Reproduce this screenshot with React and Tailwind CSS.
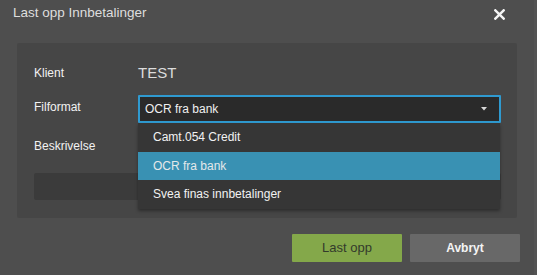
import React from "react";

export default function App() {
  const items = ["Camt.054 Credit", "OCR fra bank", "Svea finas innbetalinger"];
  return (
    <div className="w-[537px] h-[275px] bg-[#535353] font-['Liberation_Sans',Arial,sans-serif] overflow-hidden">
      <div className="w-[534px] h-[275px] bg-[#4e4e4e] flex flex-col">
        <div className="h-[43px] flex items-start justify-between pl-[13px] pr-[29px] pt-[5px]">
          <span className="text-[13.5px] leading-[16px] text-[#dedede]">Last opp Innbetalinger</span>
          <svg width="11" height="11" viewBox="0 0 11 11" className="mt-[4px]">
            <path d="M1.3 1.3 L9.7 9.7 M9.7 1.3 L1.3 9.7" stroke="#f4f4f4" strokeWidth="2.4" strokeLinecap="square" />
          </svg>
        </div>
        <div className="ml-[17px] w-[500px] h-[175px] bg-[#464646] rounded-[2px] pl-[17px] pt-[20px] flex flex-col">
          <div className="flex items-center h-[20px]">
            <span className="w-[104px] text-[12px] text-[#f2f2f2]">Klient</span>
            <span className="text-[15px] text-[#dcdcdc]">TEST</span>
          </div>
          <div className="flex items-center h-[28px] mt-[12px]">
            <span className="w-[104px] text-[12px] text-[#f2f2f2] mb-[4px]">Filformat</span>
            <div className="relative w-[363px] h-[28px]">
              <div className="w-full h-full border-2 border-[#2f9ad0] bg-[#2a2a2a] rounded-[1px] flex items-center justify-between pl-[5px] pr-[12px]">
                <span className="text-[12px] text-[#f0f0f0]">OCR fra bank</span>
                <svg width="6" height="4" viewBox="0 0 6 4">
                  <path d="M0 0 H6 L3 3.5 Z" fill="#d8d8d8" />
                </svg>
              </div>
              <div className="absolute left-0 top-full w-[362px] bg-[#363636] shadow-[0_2px_3px_rgba(0,0,0,0.35)] z-10 flex flex-col">
                {items.map((t, i) => (
                  <div
                    key={t}
                    className={
                      i === 1
                        ? "h-[28.5px] flex items-center pl-[15px] text-[12px] bg-[#3991b3] text-[#e4e8ea]"
                        : "h-[28.5px] flex items-center pl-[15px] text-[12px] text-[#f2f2f2]"
                    }
                  >
                    {t}
                  </div>
                ))}
              </div>
            </div>
          </div>
          <div className="flex items-center h-[20px] mt-[13px]">
            <span className="w-[104px] text-[12px] text-[#f2f2f2]">Beskrivelse</span>
          </div>
          <div className="mt-[17px] w-[467px] h-[27px] bg-[#3b3b3b] rounded-[2px]"></div>
        </div>
        <div className="flex justify-end gap-[8px] mt-[16px] pr-[14px]">
          <button className="w-[110px] h-[28px] bg-[#84a84a] rounded-[1px] text-[13px] text-[#333a2c]">Last opp</button>
          <button className="w-[110px] h-[28px] bg-[#686868] rounded-[1px] text-[12px] font-bold text-[#f4f4f4]">Avbryt</button>
        </div>
      </div>
    </div>
  );
}
